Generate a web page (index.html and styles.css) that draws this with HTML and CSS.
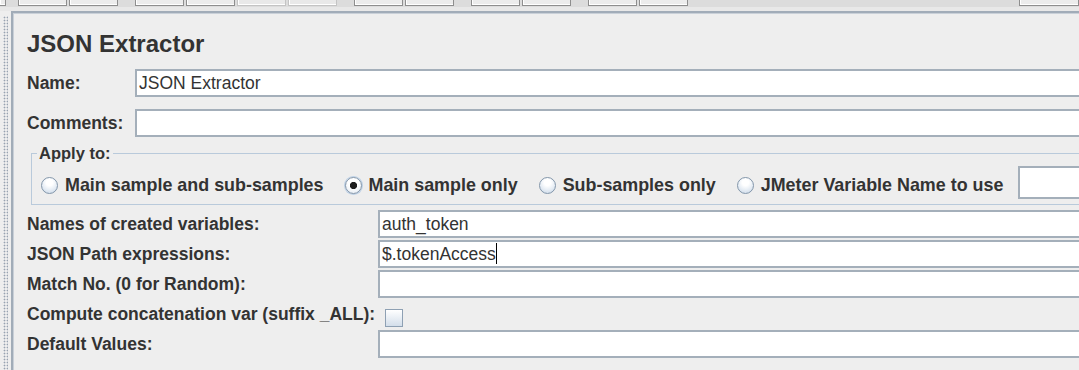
FILE: index.html
```html
<!DOCTYPE html>
<html lang="en">
<head>
    <meta charset="UTF-8">
    <meta name="viewport" content="width=device-width, initial-scale=1.0">
    <title>JSON Extractor</title>
    <link rel="stylesheet" href="styles.css">
</head>
<body>
    <div class="toolbar">
        <span class="tool-btn first"></span>
        <span class="tool-btn"></span>
        <span class="tool-btn"></span>
        <span class="tool-sep"></span>
        <span class="tool-btn"></span>
        <span class="tool-btn"></span>
        <span class="tool-btn disabled"></span>
        <span class="tool-btn disabled"></span>
        <span class="tool-sep"></span>
        <span class="tool-btn"></span>
        <span class="tool-btn"></span>
        <span class="tool-sep"></span>
        <span class="tool-btn"></span>
        <span class="tool-btn"></span>
        <span class="tool-sep"></span>
        <span class="tool-btn"></span>
        <span class="tool-btn"></span>
        <span class="tool-fill"></span>
        <span class="tool-btn last"></span>
    </div>

    <div class="main">
        <div class="splitter"></div>
        <div class="panel">
            <h1 class="title">JSON Extractor</h1>

            <div class="row">
                <label class="row-label">Name:</label>
                <div class="field">JSON Extractor</div>
            </div>
            <div class="row">
                <label class="row-label">Comments:</label>
                <div class="field"></div>
            </div>

            <fieldset class="apply">
                <legend>Apply to:</legend>
                <div class="options">
                    <label class="radio"><input type="radio" name="scope"> Main sample and sub-samples</label>
                    <label class="radio"><input type="radio" name="scope" checked> Main sample only</label>
                    <label class="radio"><input type="radio" name="scope"> Sub-samples only</label>
                    <label class="radio last"><input type="radio" name="scope"> JMeter Variable Name to use</label>
                    <div class="field var-field"></div>
                </div>
            </fieldset>

            <div class="grid">
                <label class="grid-label">Names of created variables:</label>
                <div class="field">auth_token</div>

                <label class="grid-label">JSON Path expressions:</label>
                <div class="field">$.tokenAccess<span class="caret"></span></div>

                <label class="grid-label">Match No. (0 for Random):</label>
                <div class="field"></div>

                <label class="grid-label">Compute concatenation var (suffix _ALL):</label>
                <div class="check-cell"><input type="checkbox" class="check"></div>

                <label class="grid-label">Default Values:</label>
                <div class="field"></div>
            </div>
        </div>
    </div>
</body>
</html>
```

FILE: styles.css
```css
* {
    margin: 0;
    padding: 0;
    box-sizing: border-box;
}

body {
    font-family: "Liberation Sans", Arial, sans-serif;
    background-color: #eeeeee;
    color: #333333;
    width: 1079px;
    height: 370px;
    overflow: hidden;
}

/* toolbar strip, cut off at the top */
.toolbar {
    display: flex;
    align-items: flex-start;
    height: 11px;
    background: linear-gradient(#dcdcdc 0, #dcdcdc 7px, #e8e8e8 7px);
}

.tool-btn {
    width: 49px;
    height: 6px;
    margin-right: 2px;
    flex: none;
    background-color: #ececec;
    border: 1px solid #8e8e8e;
    border-top: none;
    box-shadow: inset 1px 0 #ffffff, inset 0 -1px #ffffff;
}

.tool-btn.first {
    width: 6px;
    border-left: none;
    margin-right: 12px;
}

.tool-btn.disabled {
    border-color: #c4c4c4;
    background-color: #e9e9e9;
}

.tool-btn.last {
    width: 60px;
    margin-right: 0;
}

.tool-sep {
    width: 15px;
    flex: none;
}

.tool-fill {
    flex: 1;
}

.main {
    display: flex;
    height: 359px;
}

.splitter {
    width: 11px;
    flex: none;
    padding: 5px 3px 0 3px;
    background-color: #eeeeee;
    background-image: radial-gradient(circle, #97a2b0 0.8px, transparent 1.1px);
    background-size: 3px 3px;
    background-clip: content-box;
    background-origin: content-box;
}

.panel {
    flex: none;
    width: 1200px;
    border-top: 2px solid #a1acb8;
    border-left: 2px solid #a1acb8;
    box-shadow: inset 1px 1px #c9d0d8;
    padding: 17px 0 0 14px;
}

.title {
    font-size: 24px;
    font-weight: bold;
    line-height: 28px;
    color: #333333;
    margin-bottom: 11px;
}

.row {
    display: flex;
    align-items: center;
    height: 28px;
    margin-bottom: 12px;
}

.row-label {
    width: 108px;
    flex: none;
    font-size: 17.5px;
    font-weight: bold;
}

.field {
    flex: 1;
    height: 28px;
    background-color: #ffffff;
    border: 2px solid #a4afba;
    border-right: none;
    padding: 0 2px;
    font-size: 17.5px;
    line-height: 24px;
    color: #333333;
    white-space: nowrap;
}

.caret {
    display: inline-block;
    width: 1px;
    height: 21px;
    background-color: #000000;
    vertical-align: -4px;
}

.apply {
    margin: -6px 0 0 4px;
    border: 1px solid #b9cadb;
    border-right: none;
    padding: 3px 0 5px 0;
    min-width: 0;
}

.apply legend {
    margin-left: 5px;
    padding: 0 2px;
    font-size: 16.5px;
    font-weight: bold;
    line-height: 20px;
}

.options {
    display: flex;
    align-items: center;
    padding-left: 9px;
}

.radio {
    display: flex;
    align-items: center;
    gap: 7px;
    margin: 5px 21px 0 0;
    font-size: 17.9px;
    font-weight: bold;
    white-space: nowrap;
}

.radio.last {
    margin-right: 15px;
}

.radio input {
    appearance: none;
    width: 17px;
    height: 17px;
    border-radius: 50%;
    border: 1px solid #8396aa;
    background: radial-gradient(circle at 50% 30%, #ffffff 25%, #c6d6e7 100%);
    margin-top: 1px;
}

.radio input:checked {
    background: radial-gradient(circle, #1e1e1e 3.3px, transparent 3.9px),
                radial-gradient(circle at 50% 30%, #ffffff 40%, #dfe7f0 100%);
    box-shadow: 0 0 0 1px #bcd0e6;
}

.var-field {
    height: 33px;
}

.grid {
    display: grid;
    grid-template-columns: 351px 1fr;
    grid-auto-rows: 28px;
    row-gap: 2px;
    align-items: center;
    margin-top: 5px;
}

.grid-label {
    font-size: 17.5px;
    font-weight: bold;
    white-space: nowrap;
}

.check-cell {
    align-self: stretch;
    padding: 9px 0 0 7px;
}

.check {
    appearance: none;
    display: block;
    width: 18px;
    height: 18px;
    border: 1px solid #8ea0b3;
    background: linear-gradient(#ffffff, #d3deea);
}
```
